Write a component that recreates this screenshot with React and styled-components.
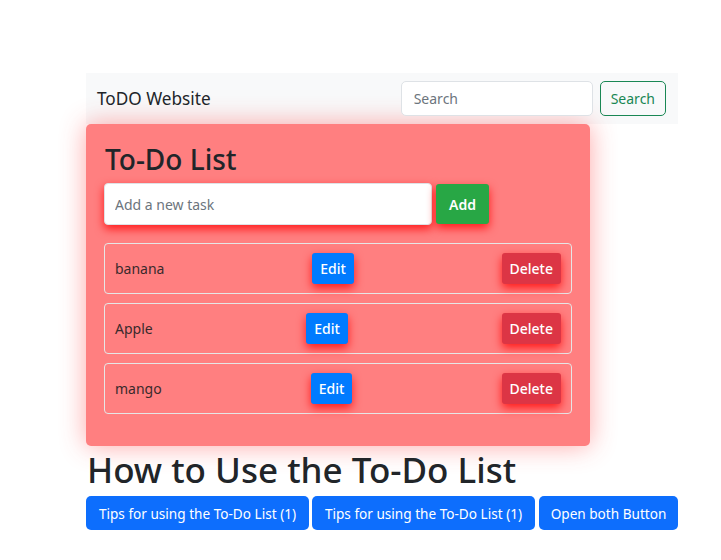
import React from 'react'
import styled, { createGlobalStyle } from 'styled-components'

const GlobalStyle = createGlobalStyle`
  body {
    margin: 0;
    background: #fff;
    font-family: "Noto Sans", "Open Sans", sans-serif;
    color: #212529;
  }
  * { box-sizing: border-box; }
`

const Page = styled.div`
  width: 592px;
  margin-left: 86px;
  padding-top: 73px;
`

const Navbar = styled.nav`
  display: flex;
  align-items: center;
  justify-content: space-between;
  height: 51px;
  padding: 0 12px 0 11px;
  background: #f8f9fa;
`

const Brand = styled.span`
  font-size: 17.2px;
  color: #212529;
`

const SearchForm = styled.form`
  display: flex;
  gap: 7px;
`

const SearchInput = styled.input`
  width: 192px;
  height: 35px;
  padding: 0 12px;
  border: 1px solid #dee2e6;
  border-radius: 5px;
  font: inherit;
  font-size: 14px;
  &::placeholder { color: #6c757d; }
`

const OutlineButton = styled.button`
  height: 35px;
  padding: 0 10px;
  border: 1px solid #198754;
  border-radius: 5px;
  background: transparent;
  color: #198754;
  font: inherit;
  font-size: 14px;
`

const Card = styled.div`
  width: 504px;
  padding: 18px 18px 32px;
  background: #ff7f80;
  border-radius: 5px;
  box-shadow: 0 0 26px rgba(255, 60, 60, 0.45);
`

const Title = styled.h2`
  margin: 0 0 6px 1px;
  font-size: 28px;
  font-weight: 500;
  line-height: 1.25;
`

const AddRow = styled.div`
  display: flex;
  align-items: center;
  gap: 4px;
  margin-bottom: 18px;
`

const TaskInput = styled.input`
  width: 328px;
  height: 42px;
  padding: 0 10px;
  border: 1px solid #dee2e6;
  border-radius: 4px;
  font: inherit;
  font-size: 14px;
  box-shadow: 0 4px 10px rgba(255, 0, 0, 0.8);
  &::placeholder { color: #6c757d; }
`

const SolidButton = styled.button`
  height: ${({ $tall }) => ($tall ? '40px' : '31px')};
  padding: 0 ${({ $tall }) => ($tall ? '13px' : '8px')};
  border: none;
  border-radius: 3px;
  background: ${({ $color }) => $color};
  color: #fff;
  font: inherit;
  font-size: 14px;
  font-weight: ${({ $tall }) => ($tall ? 600 : 500)};
  box-shadow: 0 4px 10px rgba(255, 0, 0, 0.8);
`

const TaskList = styled.div`
  display: flex;
  flex-direction: column;
  gap: 9px;
`

const TaskRow = styled.div`
  display: flex;
  align-items: center;
  justify-content: space-between;
  height: 51px;
  padding: 0 10px;
  border: 1px solid #e6e6e6;
  border-radius: 4px;
`

const TaskText = styled.span`
  font-size: 14px;
  color: #3a2a2c;
`

const Heading = styled.h1`
  margin: 3px 0 5px 1px;
  font-size: 35px;
  font-weight: 500;
  line-height: 1.2;
`

const TipRow = styled.div`
  display: flex;
  gap: 3px;
`

const TipButton = styled.button`
  flex: none;
  width: ${({ $width }) => $width}px;
  margin-left: ${({ $offset }) => $offset || 0}px;
  height: 34px;
  padding: 0;
  border: none;
  border-radius: 5px;
  background: #0d6efd;
  color: #fff;
  font: inherit;
  font-size: 13.6px;
  white-space: nowrap;
`

const tasks = ['banana', 'Apple', 'mango']

export default function App() {
  return (
    <>
      <GlobalStyle />
      <Page>
        <Navbar>
          <Brand>ToDO Website</Brand>
          <SearchForm onSubmit={(e) => e.preventDefault()}>
            <SearchInput placeholder="Search" />
            <OutlineButton>Search</OutlineButton>
          </SearchForm>
        </Navbar>
        <Card>
          <Title>To-Do List</Title>
          <AddRow>
            <TaskInput placeholder="Add a new task" />
            <SolidButton $tall $color="#28a745">Add</SolidButton>
          </AddRow>
          <TaskList>
            {tasks.map((t) => (
              <TaskRow key={t}>
                <TaskText>{t}</TaskText>
                <SolidButton $color="#007bff">Edit</SolidButton>
                <SolidButton $color="#dc3545">Delete</SolidButton>
              </TaskRow>
            ))}
          </TaskList>
        </Card>
        <Heading>How to Use the To-Do List</Heading>
        <TipRow>
          <TipButton $width={223}>Tips for using the To-Do List (1)</TipButton>
          <TipButton $width={223}>Tips for using the To-Do List (1)</TipButton>
          <TipButton $width={139} $offset={1}>Open both Button</TipButton>
        </TipRow>
      </Page>
    </>
  )
}
